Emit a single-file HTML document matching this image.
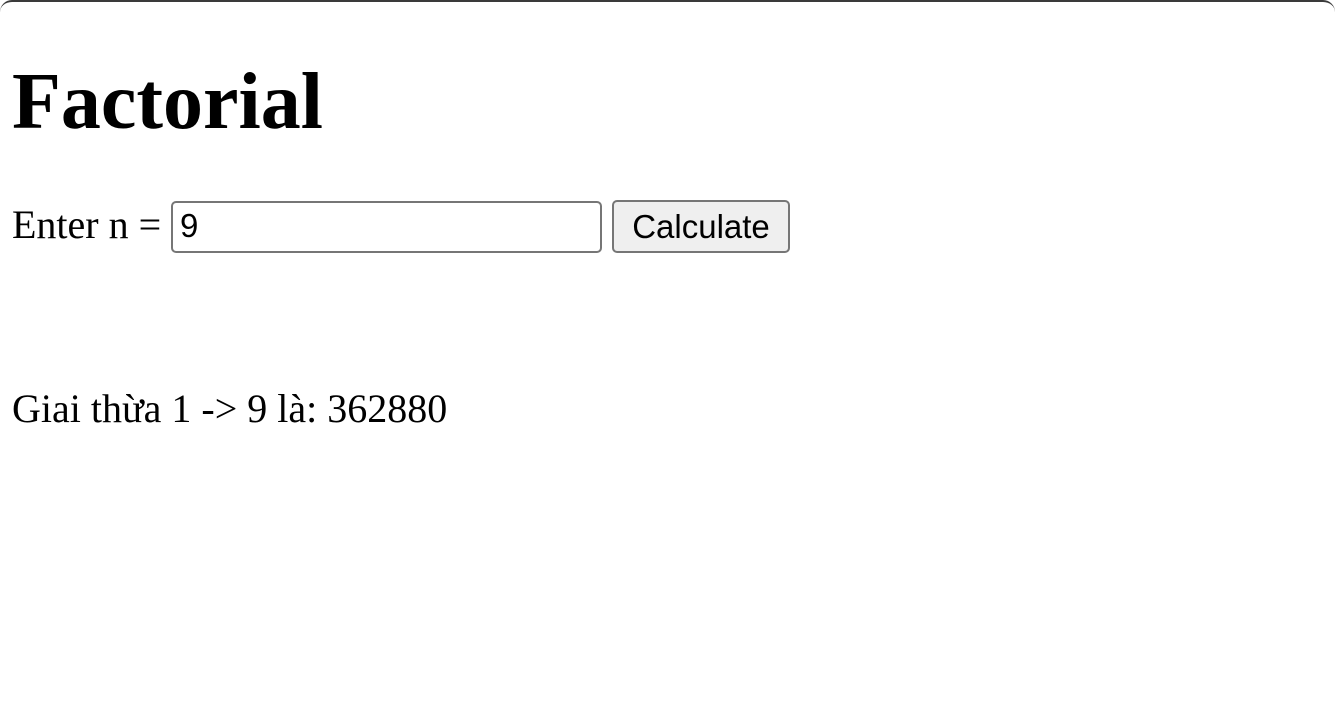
<!DOCTYPE html>
<html><head><meta charset="utf-8"><style>
html,body{margin:0;padding:0;background:#fff;width:1335px;height:705px;overflow:hidden;position:relative;font-family:"Liberation Serif",serif;}
.frame{position:absolute;left:0;top:0;width:1335px;height:20px;border-top:2px solid #3a3a3a;border-radius:12px 12px 0 0;box-sizing:border-box;}
.t{position:absolute;left:12px;white-space:nowrap;line-height:normal;}
h1{margin:0;font-size:80px;font-weight:bold;}
.inp{position:absolute;left:171px;top:201px;width:431px;height:52px;box-sizing:border-box;border:2px solid #767676;border-radius:5px;font-family:"Liberation Sans",sans-serif;font-size:33px;padding-left:7px;line-height:46px;}
.btn{position:absolute;left:612px;top:200px;width:178px;height:53px;box-sizing:border-box;border:2px solid #767676;border-radius:5px;background:#efefef;font-family:"Liberation Sans",sans-serif;font-size:33px;text-align:center;line-height:49px;}
</style></head><body>
<div class="frame"></div>
<h1 class="t" style="top:57px">Factorial</h1>
<div class="t" style="top:201px;font-size:40px">Enter n =</div>
<div class="inp">9</div>
<div class="btn">Calculate</div>
<div class="t" style="top:385px;font-size:40px">Giai thừa 1 -&gt; 9 là: 362880</div>
</body></html>
